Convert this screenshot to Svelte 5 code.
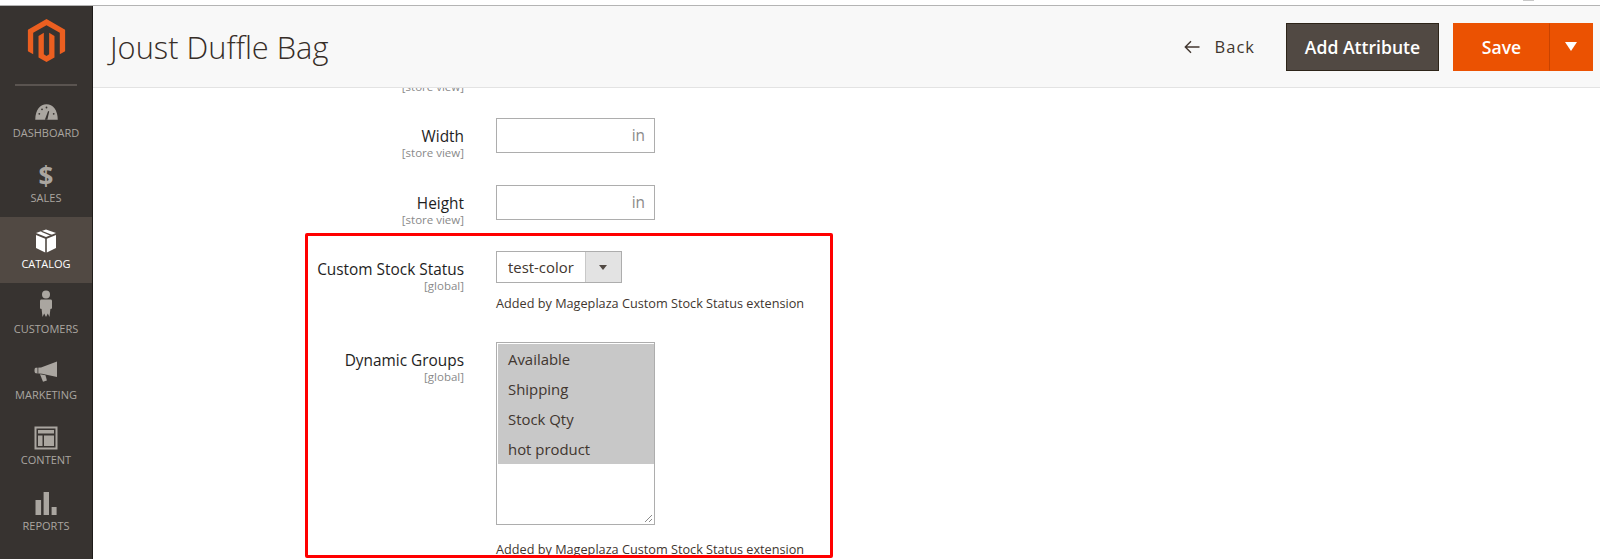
<script>
    const navItems = [
        {label: "Dashboard", icon: "dashboard"},
        {label: "Sales", icon: "sales"},
        {label: "Catalog", icon: "catalog", active: true},
        {label: "Customers", icon: "customers"},
        {label: "Marketing", icon: "marketing"},
        {label: "Content", icon: "content"},
        {label: "Reports", icon: "reports"}
    ];
    const groups = ["Available", "Shipping", "Stock Qty", "hot product"];
    const extensionNote = "Added by Mageplaza Custom Stock Status extension";
</script>

<div class="page">
    <div class="top-strip"><span class="top-speck"></span></div>
    <div class="shell">
        <nav class="sidebar">
            <div class="logo">
                <svg width="43" height="43" viewBox="0 0 24 24" fill="#eb5f20">
                    <path d="M12 24l-4.455-2.572v-12l2.97-1.715v12.001l1.485.902 1.485-.902V7.713l2.97 1.715v12L12 24zM22.391 6v12l-2.969 1.714V7.713L12 3.43 4.574 7.713v12.001L1.609 18V6L12 0l10.391 6z"/>
                </svg>
            </div>
            {#each navItems as item}
                <div class="nav-item" class:active={item.active}>
                    <div class="nav-icon">
                        {#if item.icon === "dashboard"}
                            <svg class="gauge" width="25" height="18" viewBox="0 0 26 20">
                                <path fill="#aaa6a0" d="M0.5 18.5C0.5 8 6 1.5 13 1.5S25.5 8 25.5 18.5z"/>
                                <path fill="#373330" d="M11.2 18.5l3.6-9.5 1.2.4-2 9.1z"/>
                                <circle cx="5" cy="12" r="1" fill="#373330"/>
                                <circle cx="8" cy="7" r="1" fill="#373330"/>
                                <circle cx="13" cy="5" r="1" fill="#373330"/>
                                <circle cx="21" cy="12" r="1" fill="#373330"/>
                            </svg>
                        {:else if item.icon === "sales"}
                            <span class="dollar">$</span>
                        {:else if item.icon === "catalog"}
                            <svg width="22" height="24" viewBox="0 0 22 24">
                                <path fill="#fff" d="M11 0.5l10 3.6-10 4-10-4z"/>
                                <path fill="#fff" d="M1 6l9.2 3.7V23.5L1 19z"/>
                                <path fill="#fff" d="M21 6l-9.2 3.7V23.5L21 19z"/>
                                <path fill="#514943" d="M5.5 2.6l10 4.1 1.9-.8-10-4z"/>
                            </svg>
                        {:else if item.icon === "customers"}
                            <svg class="person" width="14" height="28" viewBox="0 0 14 28">
                                <circle cx="7" cy="4.5" r="4" fill="#aaa6a0"/>
                                <path fill="#aaa6a0" d="M2.5 9.5h9c1 0 1.5.7 1.5 1.5v7.5l-1.6.6-.9 7.9-1.7-3.5L7 27l-1.8-3.5L3.5 27l-.9-7.9L1 18.5V11c0-.8.6-1.5 1.5-1.5z"/>
                            </svg>
                        {:else if item.icon === "marketing"}
                            <svg width="24" height="22" viewBox="0 0 24 22">
                                <path fill="#aaa6a0" d="M23 0.5V16L8 12.8 1.8 12.2C.8 12 .5 11 .5 9.5S.8 7 1.8 6.8L7 6.5z"/>
                                <path fill="#aaa6a0" d="M6 13.2l5.5 1 1.4 5.3-3.9 1.2z"/>
                                <path fill="#373330" d="M3.5 6v6.4h.8V6z"/>
                            </svg>
                        {:else if item.icon === "content"}
                            <svg width="24" height="24" viewBox="0 0 24 24">
                                <path fill="#aaa6a0" fill-rule="evenodd" d="M0.5 0.5h23v23h-23zM2.5 2.5v19h19v-19z"/>
                                <path fill="#aaa6a0" d="M4 4h16v3.5H4zM4 9.5h4.5V20H4zM10 9.5h10V20H10z"/>
                            </svg>
                        {:else}
                            <svg width="22" height="23" viewBox="0 0 22 23">
                                <path fill="#aaa6a0" d="M0.5 8h5.6v15H0.5zM8.6 0h5.4v23H8.6zM16.6 15h5v8h-5z"/>
                            </svg>
                        {/if}
                    </div>
                    <span class="nav-label">{item.label}</span>
                </div>
            {/each}
        </nav>

        <main class="main">
            <header class="header">
                <h1>Joust Duffle Bag</h1>
                <div class="actions">
                    <a class="back">
                        <svg width="16" height="14" viewBox="0 0 16 14" fill="none" stroke="#41362f" stroke-width="1.4">
                            <path d="M15.5 7H1.5M7 1.3L1.3 7 7 12.7"/>
                        </svg>
                        <span>Back</span>
                    </a>
                    <button class="add-attribute">Add Attribute</button>
                    <div class="save-group">
                        <button class="save">Save</button>
                        <button class="save-toggle" aria-label="More"><span class="caret"></span></button>
                    </div>
                </div>
            </header>

            <div class="form">
                <div class="clipped-scope">[store view]</div>

                <div class="row row-short">
                    <div class="label"><b>Width</b><small>[store view]</small></div>
                    <div class="addon-input"><span>in</span></div>
                </div>
                <div class="row row-short">
                    <div class="label"><b>Height</b><small>[store view]</small></div>
                    <div class="addon-input"><span>in</span></div>
                </div>
                <div class="row row-select">
                    <div class="label"><b>Custom Stock Status</b><small>[global]</small></div>
                    <div>
                        <div class="select">
                            <span class="select-value">test-color</span>
                            <span class="select-arrow"></span>
                        </div>
                        <p class="note note-select">{extensionNote}</p>
                    </div>
                </div>
                <div class="row">
                    <div class="label"><b>Dynamic Groups</b><small>[global]</small></div>
                    <div>
                        <div class="multi">
                            {#each groups as group}
                                <div class="option">{group}</div>
                            {/each}
                            <svg class="grip" width="9" height="9" viewBox="0 0 9 9" stroke="#8a8a8a" stroke-width="1">
                                <path d="M1 8L8 1M5 8l3-3"/>
                            </svg>
                        </div>
                        <p class="note note-multi">{extensionNote}</p>
                    </div>
                </div>
            </div>

            <div class="highlight"></div>
        </main>
    </div>
</div>

<style>
    :global(body) {
        margin: 0;
        background: #fff;
    }

    .page {
        height: 559px;
        overflow: hidden;
        font-family: "Open Sans", sans-serif;
        color: #303030;
    }

    .top-strip {
        height: 5px;
        border-bottom: 1px solid #b4b4b4;
        position: relative;
    }

    .top-speck {
        position: absolute;
        left: 1523px;
        top: 0;
        width: 11px;
        height: 1px;
        background: #c8c8c8;
    }

    .shell {
        display: flex;
        height: 553px;
    }

    .sidebar {
        flex: 0 0 92px;
        background: #373330;
        border-right: 1px solid #1f1c1a;
    }

    .logo {
        height: 78px;
        margin: 0 15px;
        border-bottom: 2px solid #5a5450;
        display: flex;
        justify-content: center;
    }

    .logo svg {
        margin-top: 13px;
    }

    .nav-item {
        height: 65.5px;
        display: flex;
        flex-direction: column;
        align-items: center;
        color: #aaa6a0;
    }

    .nav-item.active {
        background: #514943;
        color: #fff;
    }

    .nav-icon {
        height: 28.5px;
        margin-top: 10px;
        display: flex;
        align-items: center;
        justify-content: center;
    }

    .gauge {
        margin-top: 3px;
    }

    .person {
        margin-top: -5px;
    }

    .dollar {
        font-size: 26px;
        font-weight: 700;
        line-height: 1;
        color: #aaa6a0;
    }

    .nav-label {
        font-size: 11px;
        line-height: 16px;
        text-transform: uppercase;
    }

    .main {
        flex: 1;
        position: relative;
        min-width: 0;
        overflow: hidden;
    }

    .header {
        position: relative;
        z-index: 1;
        height: 81px;
        background: #f8f8f8;
        border-bottom: 1px solid #e3e3e3;
        display: flex;
        align-items: center;
        justify-content: space-between;
        padding: 0 7px 0 17px;
    }

    h1 {
        margin: 0;
        font-size: 30.8px;
        font-weight: 300;
        color: #362d27;
    }

    .actions {
        display: flex;
        align-items: center;
    }

    .back {
        display: flex;
        align-items: center;
        gap: 15px;
        margin-right: 31px;
        font-size: 16.5px;
        letter-spacing: 1px;
        color: #41362f;
    }

    button {
        font-family: inherit;
        border: 1px solid;
        cursor: pointer;
        padding: 0;
    }

    .add-attribute {
        width: 153px;
        height: 48px;
        background: #514943;
        border-color: #2d2419;
        color: #fff;
        font-size: 17.6px;
        font-weight: 600;
        margin-right: 14px;
    }

    .save-group {
        display: flex;
    }

    .save,
    .save-toggle {
        height: 48px;
        background: #eb5202;
        border-color: #eb5202;
        color: #fff;
    }

    .save {
        width: 97px;
        font-size: 17.6px;
        font-weight: 600;
        border-right-color: #c94300;
    }

    .save-toggle {
        width: 43px;
        border-left: 0;
        display: flex;
        align-items: center;
        justify-content: center;
    }

    .caret {
        border-left: 6.5px solid transparent;
        border-right: 6.5px solid transparent;
        border-top: 9px solid #fff;
    }

    .clipped-scope {
        margin-top: -8px;
        height: 38px;
        width: 371px;
        text-align: right;
        font-size: 11.5px;
        line-height: 14px;
        color: #8a8a8a;
    }

    .row {
        display: grid;
        grid-template-columns: 371px 1fr;
        column-gap: 32px;
    }

    .row-short {
        height: 66.5px;
    }

    .row-select {
        height: 91px;
    }

    .label {
        text-align: right;
        padding-top: 9px;
    }

    .label b {
        display: block;
        font-size: 15.4px;
        font-weight: 400;
        line-height: 20px;
        color: #1e1e1e;
    }

    .label small {
        display: block;
        font-size: 11.5px;
        line-height: 12px;
        color: #8a8a8a;
    }

    .addon-input {
        width: 159px;
        height: 35px;
        box-sizing: border-box;
        border: 1px solid #adadad;
        padding-right: 9px;
        display: flex;
        align-items: center;
        justify-content: flex-end;
        font-size: 15.4px;
        color: #8a8a8a;
    }

    .select {
        width: 126px;
        height: 32px;
        box-sizing: border-box;
        border: 1px solid #adadad;
        display: flex;
    }

    .select-value {
        flex: 1;
        padding-left: 11px;
        font-size: 14.9px;
        line-height: 30px;
        color: #41362f;
    }

    .select-arrow {
        position: relative;
        flex: 0 0 35px;
        background: #e3e3e3;
        border-left: 1px solid #c8c8c8;
    }

    .select-arrow::after {
        content: "";
        position: absolute;
        left: 13px;
        top: 13px;
        border-left: 4px solid transparent;
        border-right: 4px solid transparent;
        border-top: 5px solid #514943;
    }

    .note {
        margin: 0;
        font-size: 12.7px;
        line-height: 16px;
        color: #41362f;
    }

    .note-select {
        margin-top: 12px;
    }

    .note-multi {
        margin-top: 16px;
    }

    .multi {
        position: relative;
        width: 159px;
        height: 183px;
        box-sizing: border-box;
        border: 1px solid #adadad;
        padding: 1px 0 0 1px;
    }

    .option {
        height: 30px;
        box-sizing: border-box;
        padding-left: 10px;
        background: #c8c8c8;
        font-size: 14.9px;
        line-height: 30px;
        color: #41362f;
    }

    .grip {
        position: absolute;
        right: 1px;
        bottom: 1px;
    }

    .highlight {
        position: absolute;
        left: 212px;
        top: 227px;
        width: 528px;
        height: 325px;
        box-sizing: border-box;
        border: 3px solid #f00;
        border-radius: 2px;
        pointer-events: none;
    }
</style>
